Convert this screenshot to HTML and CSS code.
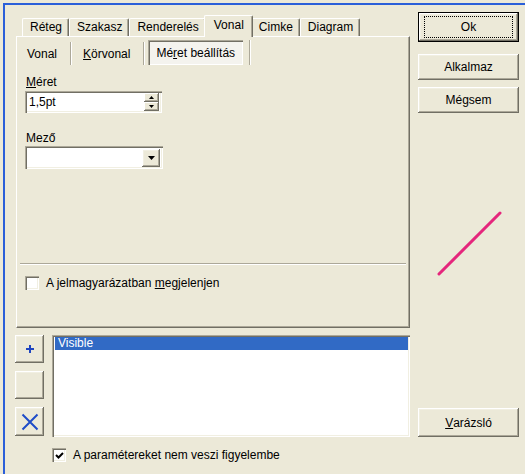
FILE: index.html
```html
<!DOCTYPE html>
<html lang="hu">
<head>
<meta charset="utf-8">
<title>Vonal beállítások</title>
<link rel="stylesheet" href="styles.css">
</head>
<body>
<div class="window">
  <div class="main">
    <div class="left">
      <div class="tabs">
        <div class="tab">Réteg</div>
        <div class="tab">Szakasz</div>
        <div class="tab">Renderelés</div>
        <div class="tab active">Vonal</div>
        <div class="tab">Cimke</div>
        <div class="tab">Diagram</div>
      </div>
      <div class="panel">
        <div class="subtabs">
          <div class="subtab first">Vonal</div>
          <div class="subtab"><u>K</u>örvonal</div>
          <div class="subtab active"><span class="subtab-box">Mé<u>r</u>et beállítás</span></div>
        </div>
        <div class="fields">
          <div class="field-label"><u>M</u>éret</div>
          <div class="spin">
            <span class="spin-value">1,5pt</span>
            <span class="spin-buttons">
              <span class="spin-btn"><svg width="5" height="3" viewBox="0 0 5 3"><path d="M2.5 0L5 3H0z" fill="#000"/></svg></span>
              <span class="spin-btn"><svg width="5" height="3" viewBox="0 0 5 3"><path d="M0 0h5L2.5 3z" fill="#000"/></svg></span>
            </span>
          </div>
          <div class="field-label second">Mező</div>
          <div class="combo">
            <span class="combo-value"></span>
            <span class="combo-btn"><svg width="7" height="4" viewBox="0 0 7 4"><path d="M0 0h7L3.5 4z" fill="#000"/></svg></span>
          </div>
        </div>
        <div class="separator"></div>
        <div class="check legend">
          <span class="box"></span>
          <span>A jelmagyarázatban <u>m</u>egjelenjen</span>
        </div>
      </div>
      <div class="params">
        <div class="tool-buttons">
          <div class="btn tool">
            <svg width="10" height="10" viewBox="0 0 10 10"><path d="M5 1v8M1 5h8" stroke="#1F45C0" stroke-width="2"/></svg>
          </div>
          <div class="btn tool"></div>
          <div class="btn tool tall">
            <svg width="18" height="18" viewBox="0 0 18 18"><path d="M1.5 1.5l15 15M16.5 1.5l-15 15" stroke="#1E4CC8" stroke-width="2"/></svg>
          </div>
        </div>
        <div class="listbox">
          <div class="list-item selected">Visible</div>
        </div>
      </div>
      <div class="check ignore">
        <span class="box"><svg width="9" height="9" viewBox="0 0 9 9"><path d="M1 4l2.5 2.5L8 2" fill="none" stroke="#000" stroke-width="2"/></svg></span>
        <span>A paramétereket nem veszi figyelembe</span>
      </div>
    </div>
    <div class="right">
      <div class="btn default"><span class="focus">Ok</span></div>
      <div class="btn apply">Alkalmaz</div>
      <div class="btn cancel">Mégsem</div>
      <div class="preview">
        <svg width="101" height="295" viewBox="0 0 101 295"><line x1="21" y1="161" x2="82" y2="100" stroke="#E5267C" stroke-width="3" stroke-linecap="round"/></svg>
      </div>
      <div class="btn wizard"><u>V</u>arázsló</div>
    </div>
  </div>
</div>
</body>
</html>
```

FILE: styles.css
```css
* { box-sizing: border-box; }

html, body {
  margin: 0;
  height: 100%;
}

body {
  background: #ECE9D8;
  font: 12px "Liberation Sans", Arial, sans-serif;
  color: #000;
  overflow: hidden;
}

u { text-decoration: underline; text-underline-offset: 1px; }

/* dialog frame: blue title edge on top and left */
.window {
  margin: 3px 0 0 3px;
  height: calc(100% - 3px);
  border-top: 2px solid #2B5FD9;
  border-left: 2px solid #2B5FD9;
}

.main {
  display: flex;
  gap: 8px;
  padding-left: 10px;
}

.left {
  width: 395px;
  display: flex;
  flex-direction: column;
  padding-top: 10px;
}

/* top tab strip */
.tabs {
  display: flex;
  align-items: flex-end;
  height: 21px;
  padding-left: 7px;
}

.tab {
  height: 18px;
  line-height: 16px;
  padding: 0 6px 0 7px;
  border-top: 1px solid #fff;
  border-left: 1px solid #fff;
  border-right: 1px solid #716F64;
  box-shadow: inset -1px 0 #ACA899;
  border-radius: 2px 2px 0 0;
  white-space: nowrap;
}

.tab.active {
  height: 22px;
  line-height: 18px;
  margin: 0 -2px -1px;
  padding: 0 8px 0 9px;
  background: #ECE9D8;
  position: relative;
  z-index: 1;
}

.panel {
  margin-left: 1px;
  height: 292px;
  border-top: 1px solid #fff;
  border-left: 1px solid #fff;
  border-right: 1px solid #716F64;
  border-bottom: 1px solid #716F64;
  box-shadow: inset -1px -1px #ACA899;
  display: flex;
  flex-direction: column;
  padding: 3px 0 37px;
}

/* button-style sub tabs */
.subtabs {
  display: flex;
  align-items: flex-end;
  height: 25px;
}

.subtab {
  height: 23px;
  display: flex;
  align-items: center;
  padding: 0 13px 0 11px;
  border-right: 1px solid #ACA899;
  box-shadow: 1px 0 0 #fff;
  margin-right: 1px;
}

.subtab.first { padding-left: 10px; }

.subtab.active {
  height: 25px;
  padding: 0 6px 0 3px;
  align-items: stretch;
}

.subtab-box {
  display: flex;
  align-items: center;
  padding: 0 8px;
  background: #F4F3EE;
  box-shadow: inset 1px 1px #ACA899, inset 2px 2px #716F64, inset -1px -1px #fff;
}

.fields {
  padding-left: 8px;
  margin-top: 10px;
}

.field-label {
  line-height: 14px;
  margin-left: 1px;
}

.field-label.second { margin-top: 18px; }

.spin, .combo {
  display: flex;
  align-items: center;
  width: 137px;
  background: #fff;
  box-shadow: inset 1px 1px #ACA899, inset 2px 2px #716F64, inset -1px -1px #fff, inset -2px -2px #F1EFE2;
  padding: 2px;
}

.spin {
  height: 22px;
  margin-top: 2px;
}

.spin-value {
  flex: 1;
  padding-left: 2px;
}

.spin-buttons {
  display: flex;
  flex-direction: column;
  width: 15px;
  height: 18px;
  margin-right: 1px;
}

.spin-btn {
  flex: 1;
  display: flex;
  align-items: center;
  justify-content: center;
  background: #ECE9D8;
  box-shadow: inset -1px -1px #716F64, inset 1px 1px #fff, inset -2px -2px #ACA899;
}

.combo {
  width: 138px;
  height: 23px;
  margin-top: 1px;
}

.combo-value { flex: 1; }

.combo-btn {
  width: 18px;
  height: 18px;
  margin-right: 1px;
  display: flex;
  align-items: center;
  justify-content: center;
  background: #ECE9D8;
  box-shadow: inset -1px -1px #716F64, inset 1px 1px #fff, inset -2px -2px #ACA899, inset 2px 2px #F1EFE2;
}

.separator {
  margin: auto 3px 0;
  height: 2px;
  border-top: 1px solid #ACA899;
  border-bottom: 1px solid #fff;
}

/* checkboxes */
.check {
  display: flex;
  align-items: center;
  gap: 7px;
  height: 14px;
}

.check .box {
  width: 14px;
  height: 14px;
  background: #fff;
  display: flex;
  align-items: center;
  justify-content: center;
  box-shadow: inset 1px 1px #ACA899, inset 2px 2px #716F64, inset -1px -1px #fff, inset -2px -2px #F1EFE2;
}

.check.legend {
  margin: 11px 0 0 8px;
}

.check.ignore {
  margin: 11px 0 0 37px;
}

/* raised push buttons */
.btn {
  display: flex;
  align-items: center;
  justify-content: center;
  background: #ECE9D8;
  box-shadow: inset -1px -1px #716F64, inset 1px 1px #fff, inset -2px -2px #ACA899, inset 2px 2px #F1EFE2;
}

.params {
  display: flex;
  gap: 8px;
  height: 102px;
  margin-top: 7px;
}

.tool-buttons {
  width: 29px;
  display: flex;
  flex-direction: column;
  gap: 8px;
}

.tool { height: 28px; }
.tool.tall { height: 29px; padding-top: 1px; }

.listbox {
  width: 358px;
  background: #fff;
  box-shadow: inset 1px 1px #ACA899, inset 2px 2px #716F64, inset -1px -1px #fff, inset -2px -2px #F1EFE2;
  padding: 2px 2px 2px 3px;
}

.list-item {
  height: 13px;
  line-height: 13px;
  padding-left: 3px;
}

.list-item.selected {
  background: #316AC5;
  color: #fff;
}

.right {
  width: 101px;
  display: flex;
  flex-direction: column;
  padding-top: 7px;
}

.btn.default {
  height: 30px;
  border: 1px solid #000;
  padding: 3px 5px 3px 5px;
}

.focus {
  flex: 1;
  align-self: stretch;
  display: flex;
  align-items: center;
  justify-content: center;
  border: 1px dotted #000;
}

.btn.apply { height: 26px; margin-top: 12px; }
.btn.cancel { height: 26px; margin-top: 7px; }

.preview { height: 295px; }
.preview svg { display: block; }

.btn.wizard { height: 29px; }
```
